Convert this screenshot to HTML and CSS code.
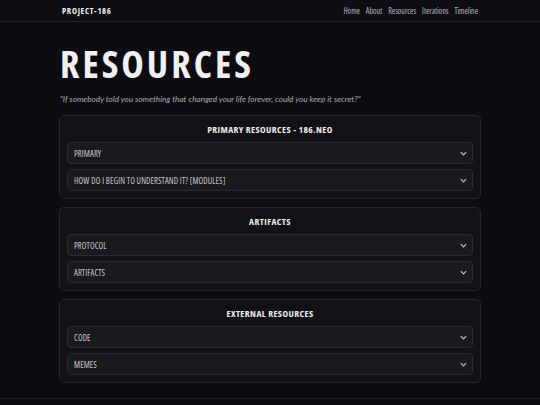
FILE: index.html
```html
<!DOCTYPE html>
<html lang="en">
<head>
<meta charset="utf-8">
<title>Project-186 · Resources</title>
<link rel="stylesheet" href="styles.css">
</head>
<body>
<nav class="topbar">
  <div class="topbar-inner">
    <a class="brand" href="#">PROJECT-186</a>
    <ul class="nav-links">
      <li><a href="#">Home</a></li>
      <li><a href="#">About</a></li>
      <li><a href="#">Resources</a></li>
      <li><a href="#">Iterations</a></li>
      <li><a href="#">Timeline</a></li>
    </ul>
  </div>
</nav>
<main class="page">
  <h1 class="title">RESOURCES</h1>
  <p class="quote">"If somebody told you something that changed your life forever, could you keep it secret?"</p>

  <section class="card">
    <h2 class="card-title">PRIMARY RESOURCES - 186.NEO</h2>
    <div class="row"><span>PRIMARY</span><svg class="chev" viewBox="0 0 8 5"><polyline points="1,1 4,4 7,1"/></svg></div>
    <div class="row"><span>HOW DO I BEGIN TO UNDERSTAND IT? [MODULES]</span><svg class="chev" viewBox="0 0 8 5"><polyline points="1,1 4,4 7,1"/></svg></div>
  </section>

  <section class="card">
    <h2 class="card-title">ARTIFACTS</h2>
    <div class="row"><span>PROTOCOL</span><svg class="chev" viewBox="0 0 8 5"><polyline points="1,1 4,4 7,1"/></svg></div>
    <div class="row"><span>ARTIFACTS</span><svg class="chev" viewBox="0 0 8 5"><polyline points="1,1 4,4 7,1"/></svg></div>
  </section>

  <section class="card">
    <h2 class="card-title">EXTERNAL RESOURCES</h2>
    <div class="row"><span>CODE</span><svg class="chev" viewBox="0 0 8 5"><polyline points="1,1 4,4 7,1"/></svg></div>
    <div class="row"><span>MEMES</span><svg class="chev" viewBox="0 0 8 5"><polyline points="1,1 4,4 7,1"/></svg></div>
  </section>
</main>
<footer class="footer"></footer>
</body>
</html>
```
FILE: styles.css
```css
html, body {
  margin: 0;
  padding: 0;
  background: #0d0d11;
}
body {
  font-family: "Open Sans", "DejaVu Sans Condensed", sans-serif;
  font-stretch: 75%;
  color: #e6e6e8;
}
a { text-decoration: none; color: inherit; }

.topbar {
  height: 21px;
  border-bottom: 1px solid #222227;
  background: #0e0e12;
}
.topbar-inner {
  width: 416px;
  height: 100%;
  margin: 0 auto;
  display: flex;
  align-items: center;
  justify-content: space-between;
}
.brand {
  font-size: 8.5px;
  font-weight: 700;
  letter-spacing: 0.7px;
  color: #ececf0;
}
.nav-links {
  list-style: none;
  margin: 0;
  padding: 0;
  display: flex;
  gap: 6px;
  font-size: 8px;
  color: #b4b6c2;
}

.page {
  width: 422px;
  margin: 0 auto;
}
.title {
  margin: 23px 0 0 1px;
  font-size: 38px;
  line-height: 36px;
  font-weight: 700;
  letter-spacing: 3px;
  color: #f0f0f2;
}
.quote {
  margin: 12px 0 10px 1px;
  font-family: "Lato", "Open Sans", sans-serif;
  font-stretch: normal;
  font-style: italic;
  font-size: 8.2px;
  line-height: 12px;
  color: #a9a9b0;
}

.card {
  background: #121216;
  border: 1px solid #25252b;
  border-radius: 5px;
  padding: 7px 7px 7px;
  margin-bottom: 8px;
  display: flex;
  flex-direction: column;
  gap: 5px;
}
.card-title {
  margin: 0;
  text-align: center;
  font-size: 9.5px;
  line-height: 14px;
  font-weight: 700;
  letter-spacing: 0.4px;
  color: #ededf0;
}
.row {
  height: 20px;
  background: #19191e;
  border: 1px solid #2a2a30;
  border-radius: 4px;
  display: flex;
  align-items: center;
  justify-content: space-between;
  padding: 0 5px 0 6px;
  font-size: 8.5px;
  font-weight: 500;
  letter-spacing: 0.12px;
  color: #cacacf;
}
.chev {
  width: 7px;
  height: 5px;
  fill: none;
  stroke: #c0c0c6;
  stroke-width: 1.4;
}

.footer {
  margin-top: 15px;
  border-top: 1px solid #222227;
  height: 20px;
}
```
